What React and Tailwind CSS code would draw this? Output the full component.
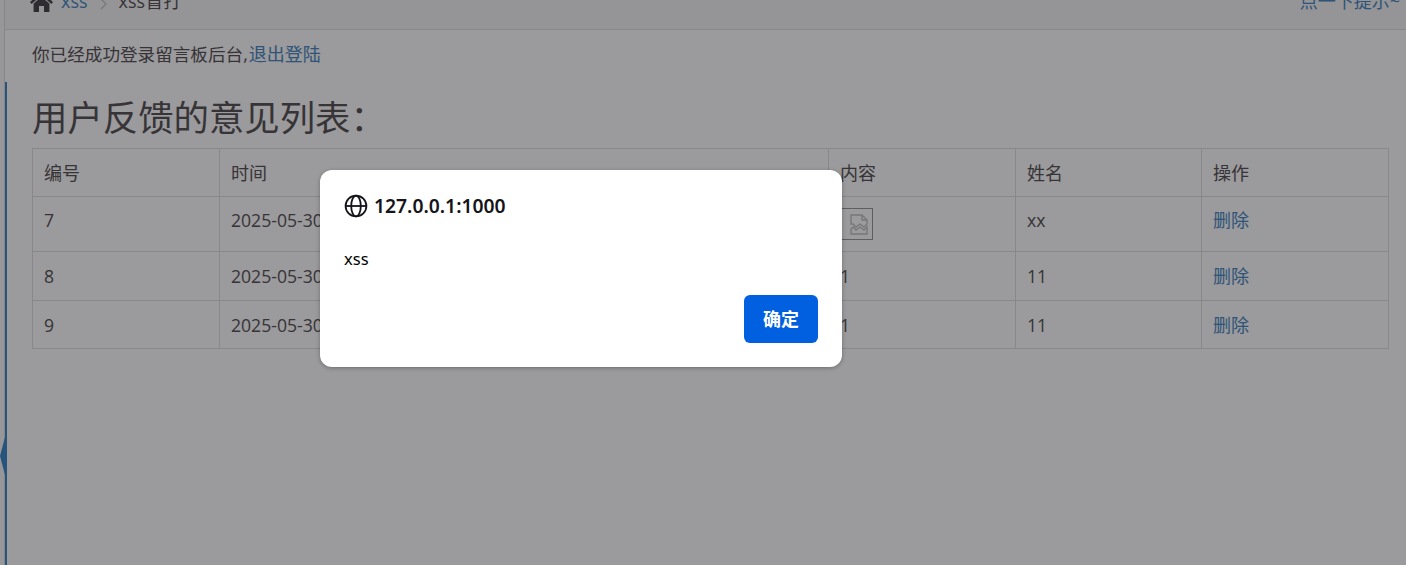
import React from 'react';

const rows = [
    { id: 7, time: '2025-05-30', name: 'xx', broken: true, height: 'h-[55px]' },
    { id: 8, time: '2025-05-30', content: '1', name: '11', height: 'h-[49px]' },
    { id: 9, time: '2025-05-30', content: '1', name: '11', height: 'h-[48px] pb-[1px]' },
];

const HomeIcon = () => (
    <svg width="23" height="20" viewBox="0 0 23 20" fill="#4a494b">
        <path d="M11.5 0 L23 10 L21.4 12 L11.5 3.4 L1.6 12 L0 10 Z" />
        <path d="M3.6 11.6 L11.5 4.8 L19.4 11.6 V20 H14 V14 H9 V20 H3.6 Z" />
        <rect x="17" y="1" width="3" height="5" />
    </svg>
);

const ChevronIcon = () => (
    <svg width="7" height="12" viewBox="0 0 7 12" fill="none" stroke="#c4c4c4" strokeWidth="1.3">
        <path d="M1 1 L6 6 L1 11" />
    </svg>
);

const GlobeIcon = () => (
    <svg width="24" height="24" viewBox="0 0 24 24" fill="none" stroke="#15141a" strokeWidth="1.8">
        <circle cx="12" cy="12" r="10.4" />
        <ellipse cx="12" cy="12" rx="4.8" ry="10.4" />
        <path d="M1.6 12 H22.4" />
    </svg>
);

const BrokenImage = () => (
    <span className="inline-flex w-[33px] h-[32px] items-center justify-center pl-[5px] border border-[#9a9a9a] align-top">
        <svg width="18" height="21" viewBox="0 0 18 21" fill="none" stroke="#c2c2c2" strokeWidth="1.4">
            <path d="M1 10 V1 H12 L17 6 V10 L14 13 L10 10 L6 13 L3 10 Z" />
            <path d="M12 1 V6 H17" />
            <path d="M1 15 L3 13 L6 16 L10 13 L14 16 L17 13 V20 H1 Z" />
        </svg>
    </span>
);

const App = () => {
    return (
        <div className="relative w-[1406px] h-[565px] overflow-hidden bg-white font-['Open_Sans','Noto_Sans_CJK_SC',sans-serif] text-[17.6px] leading-[24px] text-[#585658]">
            <div className="flex h-full">
                <div className="w-[4px] shrink-0 bg-[#f8f8f8]" />
                <div className="flex flex-col flex-1 min-w-0 border-l border-[#dcdcdc]">
                    {/* パンくず */}
                    <div className="flex items-end justify-between h-[30px] shrink-0 overflow-hidden pb-[16px] pl-[25px] pr-[6px] bg-[#f5f5f5] border-b border-[#e0e0e0]">
                        <div className="flex items-end">
                            <span className="mr-[8px] mb-[1px]"><HomeIcon /></span>
                            <span className="text-[18px] text-[#4a8bc4]">xss</span>
                            <span className="ml-[12px] mr-[12px] mb-[3px]"><ChevronIcon /></span>
                            <span className="text-[18px]">xss盲打</span>
                        </div>
                        <span className="text-[18px] text-[#4a8bc4]">点一下提示~</span>
                    </div>

                    <div className="h-[52px] shrink-0 flex items-center pb-[4px] pl-[27px]">
                        <span>你已经成功登录留言板后台,<span className="ml-[1px] text-[18px] text-[#4a8bc4]">退出登陆</span></span>
                    </div>

                    <div className="flex-1 border-l-2 border-[#3f8ac9] pl-[25px] pr-[17px]">
                        <h1 className="h-[66px] flex items-center pt-[4px] text-[35.4px] leading-[40px] font-normal">用户反馈的意见列表：</h1>
                        <table className="w-[1356px] table-fixed border-collapse">
                            <colgroup>
                                <col className="w-[187px]" />
                                <col className="w-[609px]" />
                                <col className="w-[187px]" />
                                <col className="w-[186px]" />
                                <col className="w-[187px]" />
                            </colgroup>
                            <thead>
                                <tr className="h-[48px] text-[18px]">
                                    {['编号', '时间', '内容', '姓名', '操作'].map(title => (
                                        <th key={title} className="border border-[#e0e0e0] px-[11px] font-normal text-left">{title}</th>
                                    ))}
                                </tr>
                            </thead>
                            <tbody>
                                {rows.map(row => {
                                    const cell = `border border-[#e0e0e0] px-[11px] ${row.broken ? 'align-top pt-[11px]' : ''}`;
                                    return (
                                        <tr key={row.id} className={row.height}>
                                            <td className={cell}>{row.id}</td>
                                            <td className={cell}>{row.time}</td>
                                            <td className={cell}>{row.broken ? <BrokenImage /> : row.content}</td>
                                            <td className={cell}>{row.name}</td>
                                            <td className={`${cell} text-[18px] text-[#4a8bc4]`}>删除</td>
                                        </tr>
                                    );
                                })}
                            </tbody>
                        </table>
                    </div>
                </div>
            </div>

            {/* サイドバー開閉の三角 */}
            <div className="absolute left-0 top-[437px] w-0 h-0 border-y-[19px] border-y-transparent border-r-[5px] border-r-[#3f8ac9]" />

            {/* alert ダイアログ */}
            <div className="absolute inset-0 bg-[#050208]/40 pl-[320px] pt-[170px]">
                <div className="flex flex-col w-[522px] h-[197px] rounded-[12px] bg-white px-[24px] shadow-[0_1px_4px_rgba(0,0,0,0.3)] font-['Noto_Sans','Noto_Sans_CJK_SC',sans-serif]">
                    <div className="flex items-center gap-[6px] mt-[23px] h-[25px]">
                        <GlobeIcon />
                        <span className="text-[19.3px] leading-[25px] font-semibold text-[#15141a]">127.0.0.1:1000</span>
                    </div>
                    <p className="mt-[29px] text-[16.5px] leading-[24px] text-black">xss</p>
                    <div className="flex justify-end mt-[24px]">
                        <button className="w-[74px] h-[48px] rounded-[6px] bg-[#0060df] text-white text-[18px] font-bold">确定</button>
                    </div>
                </div>
            </div>
        </div>
    );
};

export default App;
